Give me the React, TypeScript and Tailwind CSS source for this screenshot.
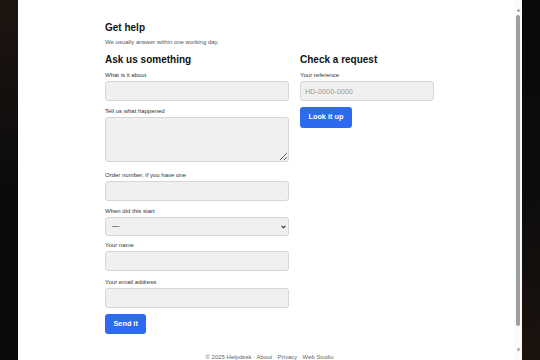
import type { ReactNode } from "react";

const font = { fontFamily: '"Liberation Sans", Arial, sans-serif' };

function Label({ children, className = "" }: { children: ReactNode; className?: string }) {
  return <label className={`block text-[6px] leading-[8px] text-[#333] mb-[2px] ${className}`}>{children}</label>;
}

const inputCls =
  "block w-full h-[20px] rounded-[3px] border border-[#d6d6d6] bg-[#f0f0f0] px-[4px] text-[7.3px] text-[#222] placeholder:text-[#9a9a9a] outline-none";

function Field({ label, className = "", children }: { label: string; className?: string; children: ReactNode }) {
  return (
    <div className={className}>
      <Label>{label}</Label>
      {children}
    </div>
  );
}

function Scrollbar() {
  return (
    <div className="flex w-[8px] flex-col items-center bg-[#fbfbfb]">
      <svg width="5" height="4" viewBox="0 0 5 4" className="mt-[8px]">
        <path d="M2.5 0.5L4.5 3.5H0.5Z" fill="#9c9c9c" />
      </svg>
      <div className="mt-[3px] h-[311px] w-[4px] rounded-[2px] bg-[#9e9e9e]" />
      <svg width="5" height="4" viewBox="0 0 5 4" className="mt-[22px]">
        <path d="M0.5 0.5H4.5L2.5 3.5Z" fill="#9c9c9c" />
      </svg>
    </div>
  );
}

export default function App() {
  return (
    <div className="flex h-[360px] w-[540px] overflow-hidden" style={font}>
      <div className="w-[18px] bg-gradient-to-b from-[#1e1510] via-[#0c0b0c] to-[#09090b]" />
      <div className="flex w-[504px] bg-white">
        <div className="flex-1 overflow-hidden pl-[87px] pt-[22px]">
          <div className="w-[329px]">
            <h1 className="text-[10px] leading-[12px] font-bold text-[#111]">Get help</h1>
            <p className="mt-[4px] text-[6px] leading-[8px] text-[#555]">We usually answer within one working day.</p>

            <div className="mt-[8px] flex gap-[11px]">
              <div className="w-[184px]">
                <h2 className="text-[10px] leading-[12px] font-bold text-[#111]">Ask us something</h2>
                <Field label="What is it about" className="mt-[5px]">
                  <input className={inputCls} />
                </Field>
                <Field label="Tell us what happened" className="mt-[6px]">
                  <textarea className="block h-[45px] w-full rounded-[3px] border border-[#d6d6d6] bg-[#f0f0f0] px-[4px] text-[7.3px] outline-none" />
                </Field>
                <Field label="Order number, if you have one" className="mt-[9px]">
                  <input className={inputCls} />
                </Field>
                <Field label="When did this start" className="mt-[6px]">
                  <div className="relative">
                    <select className="block h-[19px] w-full appearance-none rounded-[3px] border border-[#d6d6d6] bg-[#f0f0f0] pl-[6px] text-[7.3px] text-[#222] outline-none">
                      <option>—</option>
                    </select>
                    <svg width="5" height="4" viewBox="0 0 5 4" className="pointer-events-none absolute right-[3px] top-[8px]">
                      <path d="M0.6 0.8L2.5 2.8L4.4 0.8" fill="none" stroke="#222" strokeWidth="1.1" />
                    </svg>
                  </div>
                </Field>
                <Field label="Your name" className="mt-[5px]">
                  <input className={inputCls} />
                </Field>
                <Field label="Your email address" className="mt-[7px]">
                  <input className={inputCls} />
                </Field>
                <button className="mt-[6px] h-[20px] rounded-[3px] bg-[#2c6bf0] px-[8.5px] text-[7.3px] font-bold text-white">
                  Send it
                </button>
              </div>

              <div className="w-[134px]">
                <h2 className="text-[10px] leading-[12px] font-bold text-[#111]">Check a request</h2>
                <Field label="Your reference" className="mt-[5px]">
                  <input className={inputCls} placeholder="HD-0000-0000" />
                </Field>
                <button className="mt-[6px] h-[21px] rounded-[3px] bg-[#2c6bf0] px-[8.5px] text-[7.3px] font-bold text-white">
                  Look it up
                </button>
              </div>
            </div>

            <p className="mt-[19px] text-center text-[6px] leading-[8px] text-[#666]">
              © 2025 Helpdesk · About · Privacy · Web Studio
            </p>
          </div>
        </div>
        <Scrollbar />
      </div>
      <div className="w-[18px] bg-gradient-to-b from-[#0a0a0c] via-[#0c0b0c] to-[#1b130e]" />
    </div>
  );
}
